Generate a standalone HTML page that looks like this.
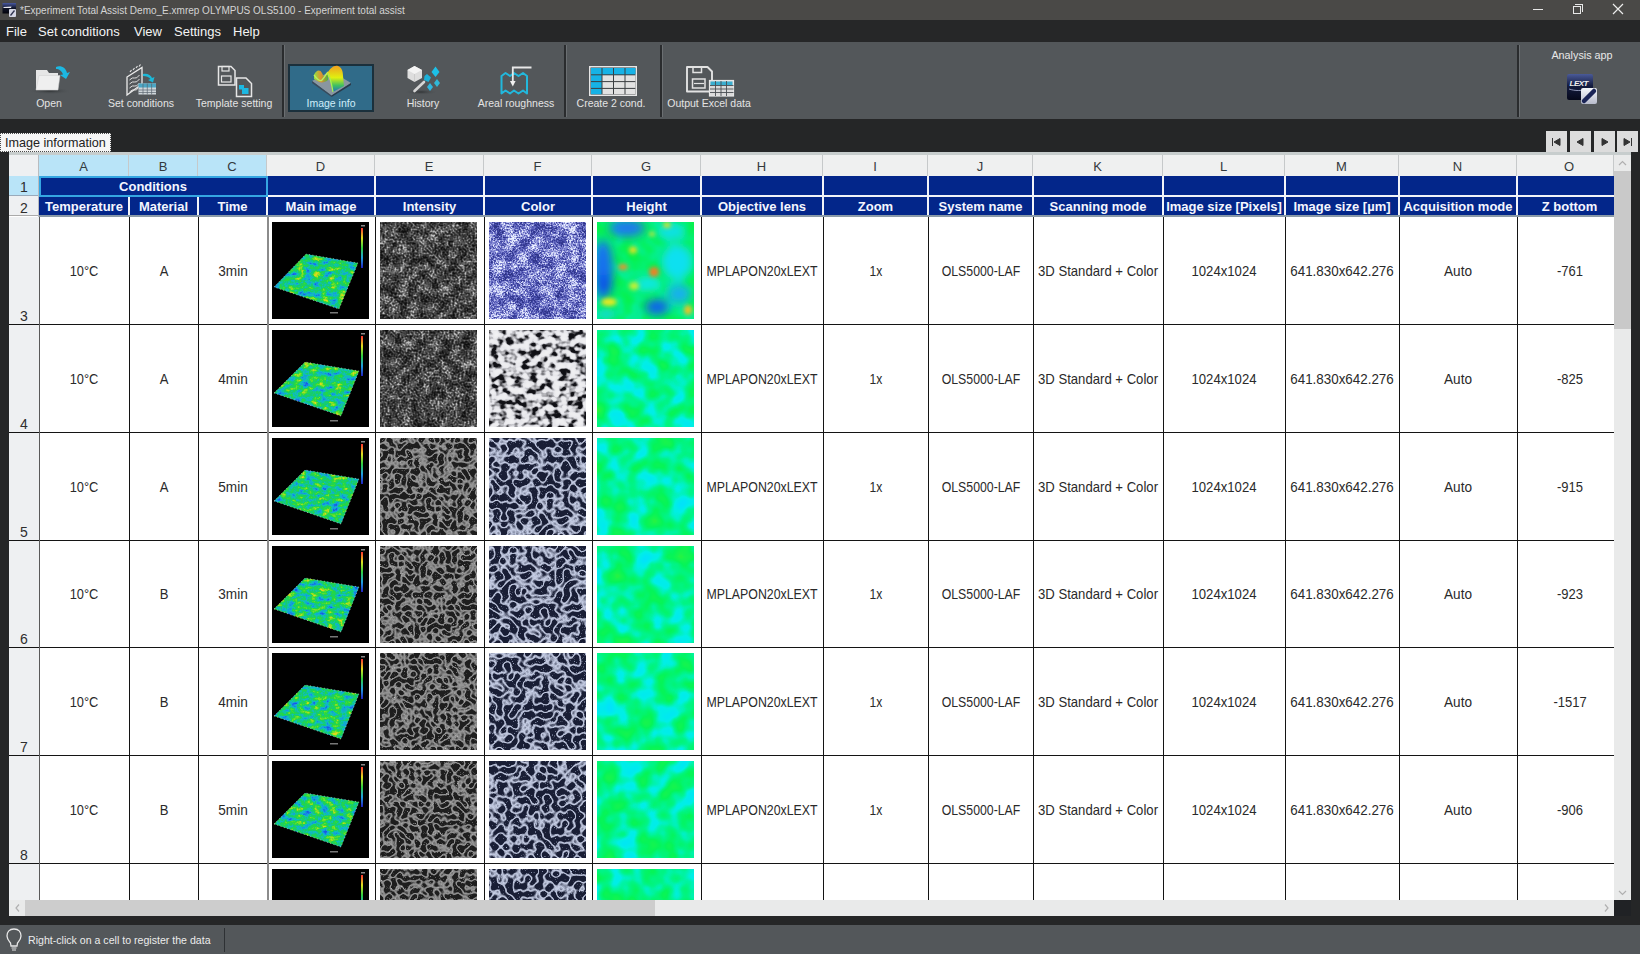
<!DOCTYPE html>
<html><head><meta charset="utf-8">
<style>
*{box-sizing:border-box;margin:0;padding:0}
html,body{width:1640px;height:954px;overflow:hidden;background:#252627;font-family:"Liberation Sans",sans-serif;position:relative}
.a{position:absolute}
svg{display:block}
#title{left:0;top:0;width:1640px;height:20px;background:#4a4947;color:#dcdcdc;font-size:10px;line-height:20px}
#menu{left:0;top:20px;width:1640px;height:22px;background:#262728;color:#f4f4f4;font-size:13px;line-height:24px}
#tool{left:0;top:42px;width:1640px;height:77px;background:#53575a}
.tl{position:absolute;top:97px;font-size:10.5px;color:#e4e4e4;white-space:nowrap;line-height:12px;text-align:center;width:120px;margin-left:-60px}
.sep{position:absolute;top:45px;width:3px;height:72px;border-left:2px solid #2a2c2e;border-right:1px solid #6b6f72}
#status{left:0;top:925px;width:1640px;height:29px;background:#53575a}
#sheet{left:9px;top:152px;width:1622px;height:764px;background:#fff;overflow:hidden}
.ch{position:absolute;top:155px;height:21px;background:#eff0f0;border-right:1px solid #c6c9ca;color:#34393c;font-size:13px;line-height:24px;text-align:center}
.nv{position:absolute;background:#03268a;color:#f4f6ff;font-weight:bold;font-size:13px;text-align:center;white-space:nowrap}
.rh{position:absolute;left:9px;width:30px;background:#eef0f2;color:#2e2e2e;font-size:14px;text-align:center}
.vl{position:absolute;width:1px;background:#141414}
.hl{position:absolute;height:1px;background:#141414}
.tx{position:absolute;color:#2a2a2a;font-size:15px;white-space:nowrap;line-height:16px}
.nb{position:absolute;top:131px;width:21px;height:21px;background:#dcdcdc}
</style></head><body>
<div id="title" class="a">
<svg class="a" style="left:0;top:0" width="20" height="20" viewBox="0 0 20 20"><defs><linearGradient id="ti" x1="0" y1="0" x2="0" y2="1"><stop offset="0" stop-color="#4858a0"/><stop offset="0.5" stop-color="#101428"/><stop offset="1" stop-color="#04040c"/></linearGradient></defs><rect x="2.5" y="3" width="13.5" height="10.5" fill="url(#ti)"/><path d="M3.5 7 L11.5 6.5 L11 8 L3.5 8 Z" fill="#e8e8f0"/><rect x="9" y="9" width="7" height="8" rx="1" fill="#d4d6e4"/><path d="M10.5 15.5 L14.5 10.5" stroke="#303450" stroke-width="1.3"/></svg>
<div class="a" style="left:20px;top:1px;color:#d4d4d4">*Experiment Total Assist Demo_E.xmrep OLYMPUS OLS5100 - Experiment total assist</div>
<div class="a" style="left:1533px;top:9px;width:10px;height:1px;background:#e8e8e8"></div>
<div class="a" style="left:1573px;top:6px;width:8px;height:8px;border:1px solid #e8e8e8"></div>
<div class="a" style="left:1575px;top:4px;width:8px;height:8px;border-top:1px solid #e8e8e8;border-right:1px solid #e8e8e8"></div>
<svg class="a" style="left:1612px;top:3px" width="12" height="12" viewBox="0 0 12 12"><path d="M1 1 L11 11 M11 1 L1 11" stroke="#ececec" stroke-width="1.2"/></svg>
</div>
<div id="menu" class="a">
<span class="a" style="left:6px">File</span>
<span class="a" style="left:38px">Set conditions</span>
<span class="a" style="left:134px">View</span>
<span class="a" style="left:174px">Settings</span>
<span class="a" style="left:233px">Help</span>
</div>
<div id="tool" class="a"></div>
<div class="sep" style="left:282px"></div>
<div class="sep" style="left:564px"></div>
<div class="sep" style="left:660px"></div>
<div class="sep" style="left:1517px"></div>
<div class="a" style="left:288px;top:64px;width:86px;height:48px;background:#306b89;border:2px solid #1b303c"></div>
<div class="tl" style="left:49px">Open</div>
<div class="tl" style="left:141px">Set conditions</div>
<div class="tl" style="left:234px">Template setting</div>
<div class="tl" style="left:331px;color:#cfeefa">Image info</div>
<div class="tl" style="left:423px">History</div>
<div class="tl" style="left:516px">Areal roughness</div>
<div class="tl" style="left:611px">Create 2 cond.</div>
<div class="tl" style="left:709px">Output Excel data</div>
<div class="a" style="left:1522px;top:48px;width:120px;text-align:center;color:#e8e8e8;font-size:10.8px;line-height:14px">Analysis app</div>

<svg class="a" style="left:25px;top:58px" width="50" height="40" viewBox="25 58 50 40">
 <defs><radialGradient id="sh" cx="0.5" cy="0.5" r="0.5"><stop offset="0" stop-color="#2e3133" stop-opacity="0.9"/><stop offset="1" stop-color="#53575a" stop-opacity="0"/></radialGradient></defs>
 <ellipse cx="50" cy="91" rx="22" ry="3.5" fill="url(#sh)"/>
 <path d="M36 70 H47 L49 73 H58 V90 H36 Z" fill="#e6e6e6"/>
 <path d="M39 75.5 H60 L58 90 H36 Z" fill="#efefef" stroke="#cfcfcf" stroke-width="0.5"/>
 <path d="M56 67 C61 65 66 68 67 73 L70 72 L66 79 L60 75 L63 74.5 C62 71 59 69 56 69 Z" fill="#1cb8e2"/>
</svg>
<svg class="a" style="left:120px;top:60px" width="42" height="40" viewBox="120 60 42 40">
 <path d="M127 77 L142 67.5 L142 84 L127 95 Z" fill="#53575a" stroke="#ececec" stroke-width="1.3"/>
 <path d="M130 72 l1.5 -2 M133 70 l1.5 -2 M136 68 l1.5 -2 M139 66.5 l1.5 -2" stroke="#e6e6e6" stroke-width="1.2"/>
 <path d="M129.5 80 q3 -3 5 -2 t5 -3 M129.5 84 q3 -3 5 -2 t5 -3 M129.5 88 q3 -3 5 -2 t5 -3 M129.5 92 q3 -3 5 -2 t4 -2.5" fill="none" stroke="#e0e0e0" stroke-width="1"/>
 <path d="M143 74 C147 73 151 75 152 78 L154.5 77 L153 82.5 L148 80 L150.5 79 C149 77 146 76 143 76 Z" fill="#1cb8d8"/>
 <rect x="138.5" y="83.5" width="17.5" height="11" fill="#cfd6da"/>
 <rect x="138.5" y="83.5" width="17.5" height="4" fill="#4ba6c4"/>
 <path d="M138.5 90 H156 M138.5 92.5 H156 M143 83.5 V94.5 M147.3 83.5 V94.5 M151.6 83.5 V94.5" stroke="#5a6670" stroke-width="0.7"/>
</svg>
<svg class="a" style="left:214px;top:62px" width="42" height="38" viewBox="214 62 42 38">
 <path d="M218.5 66.5 H231 L235 70.5 V85 H218.5 Z" fill="none" stroke="#e6e6e6" stroke-width="1.5"/>
 <rect x="222" y="66.5" width="7" height="4.5" fill="none" stroke="#e6e6e6" stroke-width="1.2"/>
 <rect x="221.5" y="76" width="9.5" height="6" fill="none" stroke="#e6e6e6" stroke-width="1.2"/>
 <path d="M236.5 78 H246 L251.5 83.5 V96.5 H236.5 Z" fill="#53575a" stroke="#e6e6e6" stroke-width="1.5"/>
 <rect x="239" y="85" width="5" height="4.5" fill="#1cb8e2"/><rect x="242" y="88" width="6.5" height="6" fill="#1cb8e2"/>
</svg>
<svg class="a" style="left:306px;top:62px" width="50" height="38" viewBox="306 62 50 38">
 <defs>
  <linearGradient id="gR" x1="0" y1="0" x2="0" y2="1"><stop offset="0" stop-color="#f0a020"/><stop offset="0.45" stop-color="#e0f010"/><stop offset="0.75" stop-color="#40c060"/><stop offset="1" stop-color="#2070c0"/></linearGradient>
  <linearGradient id="gL" x1="0" y1="0" x2="1" y2="0"><stop offset="0" stop-color="#90e040"/><stop offset="0.5" stop-color="#e09030"/><stop offset="1" stop-color="#50b040"/></linearGradient>
 </defs>
 <path d="M312 81 L331 71 L351 83 L331.5 95.5 Z" fill="#8a96a0"/>
 <path d="M312 81 L331.5 95.5 L331.5 97 L312 83 Z" fill="#3a4a5a"/>
 <path d="M331.5 95.5 L351 83 L351 85 L331.5 97 Z" fill="#2a3a4a"/>
 <path d="M314 75 C316 70 320 69 322 73 C324 78 326 76 328 72 L328 80 C326 82 322 83 319 82 L314 79 Z" fill="url(#gL)"/>
 <path d="M314 75 C317 79 320 82 322 80 C325 77 326 74 328 72" fill="none" stroke="#b8f060" stroke-width="1.4"/>
 <path d="M327 74 C330 68 334 65 338 66 C341 67 343 70 343 76 L344 86 L333 92 C332 88 331 82 329 78 Z" fill="url(#gR)"/>
 <path d="M328 73 C331 80 332 86 333 92" fill="none" stroke="#a8f050" stroke-width="1.3"/>
</svg>
<svg class="a" style="left:400px;top:60px" width="46" height="38" viewBox="400 60 46 38">
 <ellipse cx="421" cy="92" rx="17" ry="3" fill="url(#sh)"/>
 <path d="M407.5 70 L414.5 66 L422 70 L422 78 L414.5 82 L407.5 78 Z" fill="#dedede"/>
 <path d="M407.5 70 L414.5 74 L422 70 L414.5 66 Z" fill="#f4f4f4"/>
 <path d="M414.5 74 V82" stroke="#c0c0c0" stroke-width="0.6"/>
 <path d="M414.5 91 L424 82" stroke="#d6d6d6" stroke-width="2.6" stroke-linecap="round"/>
 <path d="M435.5 66.5 L439.5 72 L435.5 77 L431.5 72 Z" fill="#1cc0e8"/>
 <path d="M427 74 L431 77.5 L428.5 82 L424 80 L424.5 76 Z" fill="#1cb0d8"/>
 <path d="M437 79 L440 83 L437 87 L434 83 Z" fill="#30b8d8"/>
 <path d="M430 83 L433 87 L430 91 L427 87 Z" fill="#30b8e0"/>
</svg>
<svg class="a" style="left:496px;top:60px" width="42" height="38" viewBox="496 60 42 38">
 <path d="M501.5 76 L505.5 73 L510 76 L514 73 L518.5 76 L523 73 L527 76 L527 93.5 L523 90.5 L518.5 93.5 L514 90.5 L510 93.5 L505.5 90.5 L501.5 93.5 Z" fill="none" stroke="#22b8dc" stroke-width="2" stroke-linejoin="round"/>
 <path d="M531.5 67.5 H512.8 V82" fill="none" stroke="#e8e8e8" stroke-width="1.8"/>
 <path d="M510 81 L512.8 86.5 L515.6 81 Z" fill="#f0f0f0"/>
</svg>
<svg class="a" style="left:586px;top:63px" width="54" height="36" viewBox="586 63 54 36">
 <rect x="589" y="66" width="48" height="30" fill="#e6e6e6"/>
 <rect x="590.5" y="67.5" width="45" height="27" fill="#3a3e41"/>
 <g fill="#16b2e6"><rect x="591" y="68" width="10.5" height="6.3"/><rect x="602.5" y="68" width="10.5" height="6.3"/><rect x="614" y="68" width="10.5" height="6.3"/><rect x="625.5" y="68" width="10" height="6.3"/>
 <rect x="591" y="75.3" width="10.5" height="5.8"/><rect x="591" y="82.1" width="10.5" height="5.8"/><rect x="591" y="88.9" width="10.5" height="5.3"/></g>
 <g fill="#e2e2e2"><rect x="602.5" y="75.3" width="10.5" height="5.8"/><rect x="614" y="75.3" width="10.5" height="5.8"/><rect x="625.5" y="75.3" width="10" height="5.8"/>
 <rect x="602.5" y="82.1" width="10.5" height="5.8"/><rect x="614" y="82.1" width="10.5" height="5.8"/><rect x="625.5" y="82.1" width="10" height="5.8"/>
 <rect x="602.5" y="88.9" width="10.5" height="5.3"/><rect x="614" y="88.9" width="10.5" height="5.3"/><rect x="625.5" y="88.9" width="10" height="5.3"/></g>
</svg>
<svg class="a" style="left:682px;top:62px" width="56" height="38" viewBox="682 62 56 38">
 <path d="M687 67 H707.5 L712 71.5 V91.5 H687 Z" fill="none" stroke="#e2e2e2" stroke-width="1.9" stroke-linejoin="round"/>
 <rect x="693" y="67" width="8.5" height="5.5" fill="none" stroke="#e2e2e2" stroke-width="1.5"/>
 <rect x="692.5" y="79" width="12.5" height="9" fill="none" stroke="#e2e2e2" stroke-width="1.5"/>
 <path d="M694 83.5 H704" stroke="#e2e2e2" stroke-width="1.2"/>
 <rect x="709.5" y="80.5" width="24" height="15.5" fill="#dadada" stroke="#e6e6e6" stroke-width="1.2"/>
 <rect x="710.5" y="81.5" width="22" height="4" fill="#3aaed0"/>
 <path d="M710 85.5 H733.5 M710 89 H733.5 M710 92.5 H733.5 M715.5 81 V96 M721 81 V96 M726.5 81 V96" stroke="#4a4e52" stroke-width="0.9"/>
</svg>
<svg class="a" style="left:1564px;top:72px" width="36" height="34" viewBox="1564 72 36 34">
 <defs><linearGradient id="lx" x1="0" y1="0" x2="0" y2="1"><stop offset="0" stop-color="#4a5a98"/><stop offset="0.45" stop-color="#141c40"/><stop offset="1" stop-color="#05081a"/></linearGradient>
 <linearGradient id="bd" x1="0" y1="0" x2="0" y2="1"><stop offset="0" stop-color="#f4f6fa"/><stop offset="1" stop-color="#b8bccc"/></linearGradient></defs>
 <rect x="1567" y="74" width="26" height="26" rx="2" fill="url(#lx)"/>
 <text x="1569.5" y="86" font-family="Liberation Sans" font-style="italic" font-weight="bold" font-size="8" fill="#f0f0f0" textLength="19">LEXT</text>
 <path d="M1569 89 C1575 91 1581 91 1590 89" stroke="#b0b8d8" stroke-width="0.8" fill="none"/>
 <rect x="1581" y="88" width="16" height="16" rx="2" fill="url(#bd)"/>
 <path d="M1584 101 L1594 91" stroke="#1a2456" stroke-width="4.5" stroke-linecap="round"/>
</svg>
<div class="a" style="left:0;top:133px;width:111px;height:19px;background:#f6f6f6;border:1px dotted #4a4a4a;color:#222;font-size:12.6px;line-height:18px;padding-left:4px;white-space:nowrap">Image information</div>
<div class="nb" style="left:1546px"><svg width="21" height="21" viewBox="0 0 21 21"><path d="M6.5 7 V15 M14 7.5 L8 11 L14 14.5 Z" fill="#333" stroke="#333" stroke-width="1"/></svg></div>
<div class="nb" style="left:1570px"><svg width="21" height="21" viewBox="0 0 21 21"><path d="M13 7.5 L7 11 L13 14.5 Z" fill="#333" stroke="#333" stroke-width="1"/></svg></div>
<div class="nb" style="left:1594px"><svg width="21" height="21" viewBox="0 0 21 21"><path d="M8 7.5 L14 11 L8 14.5 Z" fill="#333" stroke="#333" stroke-width="1"/></svg></div>
<div class="nb" style="left:1617px"><svg width="21" height="21" viewBox="0 0 21 21"><path d="M14.5 7 V15 M7 7.5 L13 11 L7 14.5 Z" fill="#333" stroke="#333" stroke-width="1"/></svg></div>
<div id="sheet" class="a"></div>
<div class="a" style="left:9px;top:152px;width:1622px;height:3px;background:#c7cdcd"></div>
<div class="a" style="left:9px;top:155px;width:30px;height:21px;background:#eef0f2;border-right:1px solid #c6c9ca"></div>
<div class="ch" style="left:39px;width:90px;background:#b9e4f8">A</div>
<div class="ch" style="left:129px;width:69px;background:#b9e4f8">B</div>
<div class="ch" style="left:198px;width:69px;background:#b9e4f8">C</div>
<div class="ch" style="left:267px;width:108px;background:#eff0f0">D</div>
<div class="ch" style="left:375px;width:109px;background:#eff0f0">E</div>
<div class="ch" style="left:484px;width:108px;background:#eff0f0">F</div>
<div class="ch" style="left:592px;width:109px;background:#eff0f0">G</div>
<div class="ch" style="left:701px;width:122px;background:#eff0f0">H</div>
<div class="ch" style="left:823px;width:105px;background:#eff0f0">I</div>
<div class="ch" style="left:928px;width:105px;background:#eff0f0">J</div>
<div class="ch" style="left:1033px;width:130px;background:#eff0f0">K</div>
<div class="ch" style="left:1163px;width:122px;background:#eff0f0">L</div>
<div class="ch" style="left:1285px;width:114px;background:#eff0f0">M</div>
<div class="ch" style="left:1399px;width:118px;background:#eff0f0">N</div>
<div class="ch" style="left:1517px;width:97px;background:#eff0f0;padding-left:8px">O</div>
<div class="a" style="left:39px;top:176px;width:1575px;height:40px;background:#03268a"></div>
<div class="a" style="left:267px;top:195px;width:1347px;height:2px;background:#f2f4f8"></div>
<div class="a" style="left:266px;top:176px;width:2px;height:40px;background:#f2f4f8"></div>
<div class="a" style="left:374px;top:176px;width:2px;height:40px;background:#f2f4f8"></div>
<div class="a" style="left:483px;top:176px;width:2px;height:40px;background:#f2f4f8"></div>
<div class="a" style="left:591px;top:176px;width:2px;height:40px;background:#f2f4f8"></div>
<div class="a" style="left:700px;top:176px;width:2px;height:40px;background:#f2f4f8"></div>
<div class="a" style="left:822px;top:176px;width:2px;height:40px;background:#f2f4f8"></div>
<div class="a" style="left:927px;top:176px;width:2px;height:40px;background:#f2f4f8"></div>
<div class="a" style="left:1032px;top:176px;width:2px;height:40px;background:#f2f4f8"></div>
<div class="a" style="left:1162px;top:176px;width:2px;height:40px;background:#f2f4f8"></div>
<div class="a" style="left:1284px;top:176px;width:2px;height:40px;background:#f2f4f8"></div>
<div class="a" style="left:1398px;top:176px;width:2px;height:40px;background:#f2f4f8"></div>
<div class="a" style="left:1516px;top:176px;width:2px;height:40px;background:#f2f4f8"></div>
<div class="a" style="left:128px;top:197px;width:2px;height:19px;background:#f2f4f8"></div>
<div class="a" style="left:197px;top:197px;width:2px;height:19px;background:#f2f4f8"></div>
<div class="a" style="left:39px;top:176px;width:229px;height:21px;border:2px solid #35a6e2"></div>
<div class="nv" style="left:39px;top:177px;width:228px;height:20px;line-height:20px;background:transparent">Conditions</div>
<div class="nv" style="left:39px;top:197px;width:90px;height:18px;line-height:19px;background:transparent">Temperature</div>
<div class="nv" style="left:129px;top:197px;width:69px;height:18px;line-height:19px;background:transparent">Material</div>
<div class="nv" style="left:198px;top:197px;width:69px;height:18px;line-height:19px;background:transparent">Time</div>
<div class="nv" style="left:267px;top:197px;width:108px;height:18px;line-height:19px;background:transparent">Main image</div>
<div class="nv" style="left:375px;top:197px;width:109px;height:18px;line-height:19px;background:transparent">Intensity</div>
<div class="nv" style="left:484px;top:197px;width:108px;height:18px;line-height:19px;background:transparent">Color</div>
<div class="nv" style="left:592px;top:197px;width:109px;height:18px;line-height:19px;background:transparent">Height</div>
<div class="nv" style="left:701px;top:197px;width:122px;height:18px;line-height:19px;background:transparent">Objective lens</div>
<div class="nv" style="left:823px;top:197px;width:105px;height:18px;line-height:19px;background:transparent">Zoom</div>
<div class="nv" style="left:928px;top:197px;width:105px;height:18px;line-height:19px;background:transparent">System name</div>
<div class="nv" style="left:1033px;top:197px;width:130px;height:18px;line-height:19px;background:transparent">Scanning mode</div>
<div class="nv" style="left:1163px;top:197px;width:122px;height:18px;line-height:19px;background:transparent">Image size [Pixels]</div>
<div class="nv" style="left:1285px;top:197px;width:114px;height:18px;line-height:19px;background:transparent">Image size [µm]</div>
<div class="nv" style="left:1399px;top:197px;width:118px;height:18px;line-height:19px;background:transparent">Acquisition mode</div>
<div class="nv" style="left:1517px;top:197px;width:105px;height:18px;line-height:19px;background:transparent">Z bottom</div>
<div class="a" style="left:39px;top:215px;width:1575px;height:2px;background:#8a9aa8"></div>
<div class="rh" style="top:176px;height:20px;line-height:23px;background:#b9e4f8;border-bottom:1px solid #9ab">1</div>
<div class="rh" style="top:196px;height:20px;line-height:24px;border-bottom:1px solid #aaa">2</div>
<div class="a" style="left:38px;top:155px;width:1px;height:62px;background:#b8bcc0"></div>
<div class="rh" style="top:217px;height:107px"><span class="a" style="left:0;width:30px;bottom:0px;line-height:16px">3</span></div>
<div class="rh" style="top:325px;height:107px"><span class="a" style="left:0;width:30px;bottom:0px;line-height:16px">4</span></div>
<div class="rh" style="top:433px;height:107px"><span class="a" style="left:0;width:30px;bottom:0px;line-height:16px">5</span></div>
<div class="rh" style="top:541px;height:106px"><span class="a" style="left:0;width:30px;bottom:0px;line-height:16px">6</span></div>
<div class="rh" style="top:648px;height:107px"><span class="a" style="left:0;width:30px;bottom:0px;line-height:16px">7</span></div>
<div class="rh" style="top:756px;height:107px"><span class="a" style="left:0;width:30px;bottom:0px;line-height:16px">8</span></div>
<div class="rh" style="top:864px;height:36px"><span class="a" style="left:0;width:30px;bottom:0px;line-height:16px"></span></div>
<div class="hl" style="left:9px;top:324px;width:1605px"></div>
<div class="hl" style="left:9px;top:432px;width:1605px"></div>
<div class="hl" style="left:9px;top:540px;width:1605px"></div>
<div class="hl" style="left:9px;top:647px;width:1605px"></div>
<div class="hl" style="left:9px;top:755px;width:1605px"></div>
<div class="hl" style="left:9px;top:863px;width:1605px"></div>
<div class="vl" style="left:129px;top:217px;height:683px;width:1px;background:#141414"></div>
<div class="vl" style="left:198px;top:217px;height:683px;width:1px;background:#141414"></div>
<div class="vl" style="left:267px;top:217px;height:683px;width:2px;background:#8c8c8c"></div>
<div class="vl" style="left:375px;top:217px;height:683px;width:1px;background:#141414"></div>
<div class="vl" style="left:484px;top:217px;height:683px;width:1px;background:#141414"></div>
<div class="vl" style="left:592px;top:217px;height:683px;width:1px;background:#141414"></div>
<div class="vl" style="left:701px;top:217px;height:683px;width:1px;background:#141414"></div>
<div class="vl" style="left:823px;top:217px;height:683px;width:1px;background:#141414"></div>
<div class="vl" style="left:928px;top:217px;height:683px;width:1px;background:#141414"></div>
<div class="vl" style="left:1033px;top:217px;height:683px;width:1px;background:#141414"></div>
<div class="vl" style="left:1163px;top:217px;height:683px;width:1px;background:#141414"></div>
<div class="vl" style="left:1285px;top:217px;height:683px;width:1px;background:#141414"></div>
<div class="vl" style="left:1399px;top:217px;height:683px;width:1px;background:#141414"></div>
<div class="vl" style="left:1517px;top:217px;height:683px;width:1px;background:#141414"></div>
<div class="a" style="left:39px;top:217px;width:1px;height:683px;background:#5a5a5a"></div>
<div class="tx" style="left:84.0px;top:262.5px;transform:translateX(-50%) scaleX(0.856)">10°C</div>
<div class="tx" style="left:163.5px;top:262.5px;transform:translateX(-50%) scaleX(0.87)">A</div>
<div class="tx" style="left:232.5px;top:262.5px;transform:translateX(-50%) scaleX(0.907)">3min</div>
<div class="tx" style="left:761.5px;top:262.5px;transform:translateX(-50%) scaleX(0.822)">MPLAPON20xLEXT</div>
<div class="tx" style="left:875.5px;top:262.5px;transform:translateX(-50%) scaleX(0.808)">1x</div>
<div class="tx" style="left:980.5px;top:262.5px;transform:translateX(-50%) scaleX(0.819)">OLS5000-LAF</div>
<div class="tx" style="left:1098.0px;top:262.5px;transform:translateX(-50%) scaleX(0.875)">3D Standard + Color</div>
<div class="tx" style="left:1224.0px;top:262.5px;transform:translateX(-50%) scaleX(0.875)">1024x1024</div>
<div class="tx" style="left:1342.0px;top:262.5px;transform:translateX(-50%) scaleX(0.893)">641.830x642.276</div>
<div class="tx" style="left:1458.0px;top:262.5px;transform:translateX(-50%) scaleX(0.907)">Auto</div>
<div class="tx" style="left:1569.5px;top:262.5px;transform:translateX(-50%) scaleX(0.866)">-761</div>
<div class="tx" style="left:84.0px;top:370.5px;transform:translateX(-50%) scaleX(0.856)">10°C</div>
<div class="tx" style="left:163.5px;top:370.5px;transform:translateX(-50%) scaleX(0.87)">A</div>
<div class="tx" style="left:232.5px;top:370.5px;transform:translateX(-50%) scaleX(0.907)">4min</div>
<div class="tx" style="left:761.5px;top:370.5px;transform:translateX(-50%) scaleX(0.822)">MPLAPON20xLEXT</div>
<div class="tx" style="left:875.5px;top:370.5px;transform:translateX(-50%) scaleX(0.808)">1x</div>
<div class="tx" style="left:980.5px;top:370.5px;transform:translateX(-50%) scaleX(0.819)">OLS5000-LAF</div>
<div class="tx" style="left:1098.0px;top:370.5px;transform:translateX(-50%) scaleX(0.875)">3D Standard + Color</div>
<div class="tx" style="left:1224.0px;top:370.5px;transform:translateX(-50%) scaleX(0.875)">1024x1024</div>
<div class="tx" style="left:1342.0px;top:370.5px;transform:translateX(-50%) scaleX(0.893)">641.830x642.276</div>
<div class="tx" style="left:1458.0px;top:370.5px;transform:translateX(-50%) scaleX(0.907)">Auto</div>
<div class="tx" style="left:1569.5px;top:370.5px;transform:translateX(-50%) scaleX(0.866)">-825</div>
<div class="tx" style="left:84.0px;top:478.5px;transform:translateX(-50%) scaleX(0.856)">10°C</div>
<div class="tx" style="left:163.5px;top:478.5px;transform:translateX(-50%) scaleX(0.87)">A</div>
<div class="tx" style="left:232.5px;top:478.5px;transform:translateX(-50%) scaleX(0.907)">5min</div>
<div class="tx" style="left:761.5px;top:478.5px;transform:translateX(-50%) scaleX(0.822)">MPLAPON20xLEXT</div>
<div class="tx" style="left:875.5px;top:478.5px;transform:translateX(-50%) scaleX(0.808)">1x</div>
<div class="tx" style="left:980.5px;top:478.5px;transform:translateX(-50%) scaleX(0.819)">OLS5000-LAF</div>
<div class="tx" style="left:1098.0px;top:478.5px;transform:translateX(-50%) scaleX(0.875)">3D Standard + Color</div>
<div class="tx" style="left:1224.0px;top:478.5px;transform:translateX(-50%) scaleX(0.875)">1024x1024</div>
<div class="tx" style="left:1342.0px;top:478.5px;transform:translateX(-50%) scaleX(0.893)">641.830x642.276</div>
<div class="tx" style="left:1458.0px;top:478.5px;transform:translateX(-50%) scaleX(0.907)">Auto</div>
<div class="tx" style="left:1569.5px;top:478.5px;transform:translateX(-50%) scaleX(0.866)">-915</div>
<div class="tx" style="left:84.0px;top:586.0px;transform:translateX(-50%) scaleX(0.856)">10°C</div>
<div class="tx" style="left:163.5px;top:586.0px;transform:translateX(-50%) scaleX(0.87)">B</div>
<div class="tx" style="left:232.5px;top:586.0px;transform:translateX(-50%) scaleX(0.907)">3min</div>
<div class="tx" style="left:761.5px;top:586.0px;transform:translateX(-50%) scaleX(0.822)">MPLAPON20xLEXT</div>
<div class="tx" style="left:875.5px;top:586.0px;transform:translateX(-50%) scaleX(0.808)">1x</div>
<div class="tx" style="left:980.5px;top:586.0px;transform:translateX(-50%) scaleX(0.819)">OLS5000-LAF</div>
<div class="tx" style="left:1098.0px;top:586.0px;transform:translateX(-50%) scaleX(0.875)">3D Standard + Color</div>
<div class="tx" style="left:1224.0px;top:586.0px;transform:translateX(-50%) scaleX(0.875)">1024x1024</div>
<div class="tx" style="left:1342.0px;top:586.0px;transform:translateX(-50%) scaleX(0.893)">641.830x642.276</div>
<div class="tx" style="left:1458.0px;top:586.0px;transform:translateX(-50%) scaleX(0.907)">Auto</div>
<div class="tx" style="left:1569.5px;top:586.0px;transform:translateX(-50%) scaleX(0.866)">-923</div>
<div class="tx" style="left:84.0px;top:693.5px;transform:translateX(-50%) scaleX(0.856)">10°C</div>
<div class="tx" style="left:163.5px;top:693.5px;transform:translateX(-50%) scaleX(0.87)">B</div>
<div class="tx" style="left:232.5px;top:693.5px;transform:translateX(-50%) scaleX(0.907)">4min</div>
<div class="tx" style="left:761.5px;top:693.5px;transform:translateX(-50%) scaleX(0.822)">MPLAPON20xLEXT</div>
<div class="tx" style="left:875.5px;top:693.5px;transform:translateX(-50%) scaleX(0.808)">1x</div>
<div class="tx" style="left:980.5px;top:693.5px;transform:translateX(-50%) scaleX(0.819)">OLS5000-LAF</div>
<div class="tx" style="left:1098.0px;top:693.5px;transform:translateX(-50%) scaleX(0.875)">3D Standard + Color</div>
<div class="tx" style="left:1224.0px;top:693.5px;transform:translateX(-50%) scaleX(0.875)">1024x1024</div>
<div class="tx" style="left:1342.0px;top:693.5px;transform:translateX(-50%) scaleX(0.893)">641.830x642.276</div>
<div class="tx" style="left:1458.0px;top:693.5px;transform:translateX(-50%) scaleX(0.907)">Auto</div>
<div class="tx" style="left:1569.5px;top:693.5px;transform:translateX(-50%) scaleX(0.866)">-1517</div>
<div class="tx" style="left:84.0px;top:801.5px;transform:translateX(-50%) scaleX(0.856)">10°C</div>
<div class="tx" style="left:163.5px;top:801.5px;transform:translateX(-50%) scaleX(0.87)">B</div>
<div class="tx" style="left:232.5px;top:801.5px;transform:translateX(-50%) scaleX(0.907)">5min</div>
<div class="tx" style="left:761.5px;top:801.5px;transform:translateX(-50%) scaleX(0.822)">MPLAPON20xLEXT</div>
<div class="tx" style="left:875.5px;top:801.5px;transform:translateX(-50%) scaleX(0.808)">1x</div>
<div class="tx" style="left:980.5px;top:801.5px;transform:translateX(-50%) scaleX(0.819)">OLS5000-LAF</div>
<div class="tx" style="left:1098.0px;top:801.5px;transform:translateX(-50%) scaleX(0.875)">3D Standard + Color</div>
<div class="tx" style="left:1224.0px;top:801.5px;transform:translateX(-50%) scaleX(0.875)">1024x1024</div>
<div class="tx" style="left:1342.0px;top:801.5px;transform:translateX(-50%) scaleX(0.893)">641.830x642.276</div>
<div class="tx" style="left:1458.0px;top:801.5px;transform:translateX(-50%) scaleX(0.907)">Auto</div>
<div class="tx" style="left:1569.5px;top:801.5px;transform:translateX(-50%) scaleX(0.866)">-906</div>
<svg width="0" height="0" style="position:absolute">
<defs>
<filter id="fIntDark" x="0" y="0" width="100%" height="100%" color-interpolation-filters="sRGB">
 <feTurbulence type="fractalNoise" baseFrequency="0.5" numOctaves="2" seed="3" result="hi0"/>
 <feColorMatrix in="hi0" type="matrix" values="1 0 0 0 0  1 0 0 0 0  1 0 0 0 0  0 0 0 0 1" result="hi"/>
 <feTurbulence type="fractalNoise" baseFrequency="0.1" numOctaves="3" seed="9" result="lo0"/>
 <feColorMatrix in="lo0" type="matrix" values="1 0 0 0 0  1 0 0 0 0  1 0 0 0 0  0 0 0 0 1" result="lo"/>
 <feComposite in="hi" in2="lo" operator="arithmetic" k1="0" k2="1.4" k3="1.0" k4="-0.7" result="g"/>
 <feComponentTransfer in="g"><feFuncR type="table" tableValues="0.06 0.11 0.18 0.27 0.39 0.56 0.75"/><feFuncG type="table" tableValues="0.06 0.11 0.18 0.27 0.39 0.56 0.75"/><feFuncB type="table" tableValues="0.06 0.11 0.18 0.27 0.39 0.56 0.75"/></feComponentTransfer>
</filter>
<filter id="fIntCell" x="0" y="0" width="100%" height="100%" color-interpolation-filters="sRGB">
 <feTurbulence type="fractalNoise" baseFrequency="0.16" numOctaves="1" seed="5" result="lo0"/>
 <feColorMatrix in="lo0" type="matrix" values="1 0 0 0 0  1 0 0 0 0  1 0 0 0 0  0 0 0 0 1" result="lo"/>
 <feTurbulence type="fractalNoise" baseFrequency="0.9" numOctaves="1" seed="2" result="hi0"/>
 <feColorMatrix in="hi0" type="matrix" values="1 0 0 0 0  1 0 0 0 0  1 0 0 0 0  0 0 0 0 1" result="hi"/>
 <feComposite in="lo" in2="hi" operator="arithmetic" k1="0" k2="2.6" k3="0.1" k4="-0.850" result="g"/>
 <feComponentTransfer in="g" result="c"><feFuncR type="table" tableValues="0.12 0.12 0.12 0.12 0.12 0.12 0.12 0.12 0.12 0.12 0.146 0.21 0.274 0.339 0.403 0.467 0.5 0.525 0.55 0.575 0.6 0.575 0.55 0.525 0.5 0.467 0.403 0.339 0.274 0.21 0.146 0.12 0.12 0.12 0.12 0.12 0.12 0.12 0.12 0.12 0.12"/><feFuncG type="table" tableValues="0.12 0.12 0.12 0.12 0.12 0.12 0.12 0.12 0.12 0.12 0.146 0.21 0.274 0.339 0.403 0.467 0.5 0.525 0.55 0.575 0.6 0.575 0.55 0.525 0.5 0.467 0.403 0.339 0.274 0.21 0.146 0.12 0.12 0.12 0.12 0.12 0.12 0.12 0.12 0.12 0.12"/><feFuncB type="table" tableValues="0.12 0.12 0.12 0.12 0.12 0.12 0.12 0.12 0.12 0.12 0.146 0.21 0.274 0.339 0.403 0.467 0.5 0.525 0.55 0.575 0.6 0.575 0.55 0.525 0.5 0.467 0.403 0.339 0.274 0.21 0.146 0.12 0.12 0.12 0.12 0.12 0.12 0.12 0.12 0.12 0.12"/></feComponentTransfer>
 <feColorMatrix in="hi" type="matrix" values="0 0 0 0 0.75  0 0 0 0 0.75  0 0 0 0 0.75  5 0 0 0 -3.2" result="s"/>
 <feMerge><feMergeNode in="c"/><feMergeNode in="s"/></feMerge>
</filter>
<filter id="fColBlue" x="0" y="0" width="100%" height="100%" color-interpolation-filters="sRGB">
 <feTurbulence type="fractalNoise" baseFrequency="0.65" numOctaves="2" seed="7" result="hi0"/>
 <feColorMatrix in="hi0" type="matrix" values="1 0 0 0 0  1 0 0 0 0  1 0 0 0 0  0 0 0 0 1" result="hi"/>
 <feTurbulence type="fractalNoise" baseFrequency="0.08" numOctaves="3" seed="1" result="lo0"/>
 <feColorMatrix in="lo0" type="matrix" values="1 0 0 0 0  1 0 0 0 0  1 0 0 0 0  0 0 0 0 1" result="lo"/>
 <feComposite in="hi" in2="lo" operator="arithmetic" k1="0" k2="1.5" k3="1.2" k4="-0.85" result="g"/>
 <feComponentTransfer in="g"><feFuncR type="table" tableValues="0.18 0.22 0.34 0.55 0.8 0.93"/><feFuncG type="table" tableValues="0.2 0.24 0.36 0.57 0.82 0.95"/><feFuncB type="table" tableValues="0.52 0.6 0.72 0.85 0.96 1"/></feComponentTransfer>
</filter>
<filter id="fColSpots" x="0" y="0" width="100%" height="100%" color-interpolation-filters="sRGB">
 <feTurbulence type="fractalNoise" baseFrequency="0.13 0.16" numOctaves="2" seed="12" result="lo"/>
 <feColorMatrix in="lo" type="matrix" values="1 0 0 0 0  1 0 0 0 0  1 0 0 0 0  0 0 0 0 1" result="g"/>
 <feComponentTransfer in="g"><feFuncR type="table" tableValues="0.95 0.95 0.94 0.93 0.9 0.6 0.08 0.06 0.06 0.06"/><feFuncG type="table" tableValues="0.95 0.95 0.94 0.93 0.9 0.6 0.08 0.06 0.06 0.06"/><feFuncB type="table" tableValues="0.96 0.96 0.95 0.94 0.92 0.62 0.1 0.08 0.08 0.08"/></feComponentTransfer>
</filter>
<filter id="fColCell" x="0" y="0" width="100%" height="100%" color-interpolation-filters="sRGB">
 <feTurbulence type="fractalNoise" baseFrequency="0.13" numOctaves="1" seed="8" result="lo0"/>
 <feColorMatrix in="lo0" type="matrix" values="1 0 0 0 0  1 0 0 0 0  1 0 0 0 0  0 0 0 0 1" result="lo"/>
 <feTurbulence type="fractalNoise" baseFrequency="0.9" numOctaves="1" seed="4" result="hi0"/>
 <feColorMatrix in="hi0" type="matrix" values="1 0 0 0 0  1 0 0 0 0  1 0 0 0 0  0 0 0 0 1" result="hi"/>
 <feComposite in="lo" in2="hi" operator="arithmetic" k1="0" k2="2.6" k3="0.1" k4="-0.850" result="g"/>
 <feComponentTransfer in="g" result="c"><feFuncR type="table" tableValues="0.1 0.1 0.1 0.1 0.1 0.1 0.1 0.1 0.1 0.1 0.1 0.155 0.246 0.337 0.428 0.519 0.61 0.652 0.695 0.738 0.78 0.738 0.695 0.653 0.61 0.519 0.428 0.337 0.246 0.155 0.1 0.1 0.1 0.1 0.1 0.1 0.1 0.1 0.1 0.1 0.1"/><feFuncG type="table" tableValues="0.12 0.12 0.12 0.12 0.12 0.12 0.12 0.12 0.12 0.12 0.12 0.175 0.268 0.36 0.453 0.545 0.638 0.681 0.724 0.767 0.81 0.767 0.724 0.681 0.638 0.545 0.453 0.36 0.268 0.175 0.12 0.12 0.12 0.12 0.12 0.12 0.12 0.12 0.12 0.12 0.12"/><feFuncB type="table" tableValues="0.21 0.21 0.21 0.21 0.21 0.21 0.21 0.21 0.21 0.21 0.21 0.265 0.358 0.45 0.543 0.635 0.728 0.771 0.814 0.857 0.9 0.857 0.814 0.771 0.728 0.635 0.543 0.45 0.358 0.265 0.21 0.21 0.21 0.21 0.21 0.21 0.21 0.21 0.21 0.21 0.21"/></feComponentTransfer>
 <feColorMatrix in="hi" type="matrix" values="0 0 0 0 0.8  0 0 0 0 0.84  0 0 0 0 0.95  5 0 0 0 -3.2" result="s"/>
 <feMerge><feMergeNode in="c"/><feMergeNode in="s"/></feMerge>
</filter>
<filter id="fHeight3" x="0" y="0" width="100%" height="100%" color-interpolation-filters="sRGB">
 <feTurbulence type="fractalNoise" baseFrequency="0.04" numOctaves="2" seed="23" result="lo0"/>
 <feColorMatrix in="lo0" type="matrix" values="1 0 0 0 0  1 0 0 0 0  1 0 0 0 0  0 0 0 0 1" result="lo"/>
 <feTurbulence type="fractalNoise" baseFrequency="0.2" numOctaves="2" seed="17" result="hi0"/>
 <feColorMatrix in="hi0" type="matrix" values="1 0 0 0 0  1 0 0 0 0  1 0 0 0 0  0 0 0 0 1" result="hi"/>
 <feComposite in="lo" in2="hi" operator="arithmetic" k1="0" k2="1.3" k3="0.6" k4="-0.45" result="g"/>
 <feComponentTransfer in="g"><feFuncR type="table" tableValues="0 0 0 0 0 0 0.05 0.4 0.95 1"/><feFuncG type="table" tableValues="0.2 0.45 0.75 0.92 0.97 1 1 0.95 0.7 0.25"/><feFuncB type="table" tableValues="0.95 1 1 0.9 0.6 0.3 0.1 0 0 0"/></feComponentTransfer>
</filter>
<filter id="fHeight" x="0" y="0" width="100%" height="100%" color-interpolation-filters="sRGB">
 <feTurbulence type="fractalNoise" baseFrequency="0.05" numOctaves="2" seed="31" result="lo"/>
 <feColorMatrix in="lo" type="matrix" values="1 0 0 0 0  1 0 0 0 0  1 0 0 0 0  0 0 0 0 1" result="g"/>
 <feComponentTransfer in="g"><feFuncR type="table" tableValues="0.05 0.0 0.0 0.0 0.02 0.1 0.3"/><feFuncG type="table" tableValues="0.85 0.9 0.94 0.96 0.96 0.96 0.94"/><feFuncB type="table" tableValues="1 0.97 0.9 0.55 0.35 0.3 0.15"/></feComponentTransfer>
</filter>
<filter id="fMain" x="0" y="0" width="100%" height="100%" color-interpolation-filters="sRGB">
 <feTurbulence type="fractalNoise" baseFrequency="0.12 0.2" numOctaves="2" seed="41" result="lo0"/>
 <feColorMatrix in="lo0" type="matrix" values="1 0 0 0 0  1 0 0 0 0  1 0 0 0 0  0 0 0 0 1" result="lo"/>
 <feTurbulence type="fractalNoise" baseFrequency="0.6" numOctaves="1" seed="43" result="hi0"/>
 <feColorMatrix in="hi0" type="matrix" values="1 0 0 0 0  1 0 0 0 0  1 0 0 0 0  0 0 0 0 1" result="hi"/>
 <feComposite in="lo" in2="hi" operator="arithmetic" k1="0" k2="1.4" k3="0.5" k4="-0.45" result="g"/>
 <feComponentTransfer in="g" result="c"><feFuncR type="table" tableValues="0.1 0.08 0.06 0.08 0.15 0.5 0.9"/><feFuncG type="table" tableValues="0.35 0.6 0.75 0.8 0.85 0.88 0.85"/><feFuncB type="table" tableValues="0.9 0.88 0.75 0.45 0.25 0.15 0.1"/></feComponentTransfer>
 <feComposite in="c" in2="SourceAlpha" operator="in"/>
</filter>
<filter id="fBlur" x="-50%" y="-50%" width="200%" height="200%"><feGaussianBlur stdDeviation="5"/></filter>
<filter id="fBlur2" x="-50%" y="-50%" width="200%" height="200%"><feGaussianBlur stdDeviation="2"/></filter>
<linearGradient id="cbar" x1="0" y1="0" x2="0" y2="1"><stop offset="0" stop-color="#ff3030"/><stop offset="0.25" stop-color="#e0e020"/><stop offset="0.5" stop-color="#30d040"/><stop offset="0.75" stop-color="#20a0e0"/><stop offset="1" stop-color="#2020c0"/></linearGradient>
</defs></svg>
<svg class="a" style="left:272px;top:222px" width="97" height="97" viewBox="0 0 97 97"><rect x="0" y="0" width="97" height="97" fill="#000"/><polygon points="2.0,65.0 34.0,32.0 86.0,41.0 67.0,87.0" fill="#fff" filter="url(#fMain)"/><polygon points="2.0,65.0 34.0,32.0 86.0,41.0 67.0,87.0" fill="none" stroke="#c8d0d0" stroke-width="0.7" stroke-dasharray="1 2.5"/><rect x="89" y="6" width="2" height="40" fill="url(#cbar)"/><rect x="89" y="3" width="4" height="1.5" fill="#888"/><rect x="58" y="90" width="8" height="1.5" fill="#777"/></svg>
<svg class="a" style="left:380px;top:222px" width="97" height="97" viewBox="11 7 97 97"><rect x="11" y="7" width="97" height="97" filter="url(#fIntDark)"/></svg>
<svg class="a" style="left:489px;top:222px" width="97" height="97" viewBox="22 14 97 97"><rect x="22" y="14" width="97" height="97" filter="url(#fColBlue)"/></svg>
<svg class="a" style="left:597px;top:222px" width="97" height="97" viewBox="33 21 97 97"><clipPath id="cpH"><rect x="33" y="21" width="97" height="97"/></clipPath><g clip-path="url(#cpH)"><rect x="33" y="21" width="97" height="97" fill="#08f048"/><rect x="33" y="21" width="97" height="97" filter="url(#fHeight)" opacity="0.45"/><g filter="url(#fBlur)"><ellipse cx="39" cy="69" rx="10" ry="30" fill="#1870f0"/><ellipse cx="41" cy="83" rx="7" ry="10" fill="#0a50e8"/><ellipse cx="63" cy="27" rx="18" ry="9" fill="#1a78f0"/><ellipse cx="93" cy="106" rx="12" ry="8" fill="#1060f0"/><ellipse cx="113" cy="61" rx="16" ry="18" fill="#08e0f0"/><ellipse cx="108" cy="31" rx="14" ry="8" fill="#10e0e8"/><ellipse cx="115" cy="93" rx="12" ry="10" fill="#18b0f0"/><ellipse cx="83" cy="83" rx="14" ry="8" fill="#10e8e0"/><ellipse cx="43" cy="113" rx="10" ry="5" fill="#10d8f0"/></g><g filter="url(#fBlur2)"><ellipse cx="59" cy="66" rx="5" ry="3" fill="#f09020"/><ellipse cx="69" cy="49" rx="4" ry="3.5" fill="#e8e020"/><ellipse cx="90" cy="71" rx="5" ry="5" fill="#f08020"/><ellipse cx="45" cy="101" rx="8" ry="4" fill="#e8e820"/><ellipse cx="124" cy="109" rx="4" ry="5" fill="#f0c020"/><ellipse cx="103" cy="24" rx="4" ry="3" fill="#d0e030"/><ellipse cx="70" cy="85" rx="5" ry="4" fill="#c8f030"/><ellipse cx="88" cy="33" rx="3" ry="2" fill="#e8e030"/></g></g></svg>
<svg class="a" style="left:272px;top:330px" width="97" height="97" viewBox="37 53 97 97"><rect x="37" y="53" width="97" height="97" fill="#000"/><polygon points="39.0,116.0 70.0,85.0 124.0,94.0 106.0,139.0" fill="#fff" filter="url(#fMain)"/><polygon points="39.0,116.0 70.0,85.0 124.0,94.0 106.0,139.0" fill="none" stroke="#c8d0d0" stroke-width="0.7" stroke-dasharray="1 2.5"/><rect x="126" y="59" width="2" height="40" fill="url(#cbar)"/><rect x="126" y="56" width="4" height="1.5" fill="#888"/><rect x="95" y="143" width="8" height="1.5" fill="#777"/></svg>
<svg class="a" style="left:380px;top:330px" width="97" height="97" viewBox="48 60 97 97"><rect x="48" y="60" width="97" height="97" filter="url(#fIntDark)"/></svg>
<svg class="a" style="left:489px;top:330px" width="97" height="97" viewBox="59 67 97 97"><rect x="59" y="67" width="97" height="97" filter="url(#fColSpots)"/></svg>
<svg class="a" style="left:597px;top:330px" width="97" height="97" viewBox="70 74 97 97"><rect x="70" y="74" width="97" height="97" filter="url(#fHeight)"/></svg>
<svg class="a" style="left:272px;top:438px" width="97" height="97" viewBox="74 106 97 97"><rect x="74" y="106" width="97" height="97" fill="#000"/><polygon points="76.0,169.0 107.0,138.0 161.0,147.0 143.0,192.0" fill="#fff" filter="url(#fMain)"/><polygon points="76.0,169.0 107.0,138.0 161.0,147.0 143.0,192.0" fill="none" stroke="#c8d0d0" stroke-width="0.7" stroke-dasharray="1 2.5"/><rect x="163" y="112" width="2" height="40" fill="url(#cbar)"/><rect x="163" y="109" width="4" height="1.5" fill="#888"/><rect x="132" y="196" width="8" height="1.5" fill="#777"/></svg>
<svg class="a" style="left:380px;top:438px" width="97" height="97" viewBox="85 113 97 97"><rect x="85" y="113" width="97" height="97" filter="url(#fIntCell)"/></svg>
<svg class="a" style="left:489px;top:438px" width="97" height="97" viewBox="96 120 97 97"><rect x="96" y="120" width="97" height="97" filter="url(#fColCell)"/></svg>
<svg class="a" style="left:597px;top:438px" width="97" height="97" viewBox="107 127 97 97"><rect x="107" y="127" width="97" height="97" filter="url(#fHeight)"/></svg>
<svg class="a" style="left:272px;top:546px" width="97" height="97" viewBox="111 159 97 97"><rect x="111" y="159" width="97" height="97" fill="#000"/><polygon points="113.0,222.0 144.0,191.0 198.0,200.0 180.0,245.0" fill="#fff" filter="url(#fMain)"/><polygon points="113.0,222.0 144.0,191.0 198.0,200.0 180.0,245.0" fill="none" stroke="#c8d0d0" stroke-width="0.7" stroke-dasharray="1 2.5"/><rect x="200" y="165" width="2" height="40" fill="url(#cbar)"/><rect x="200" y="162" width="4" height="1.5" fill="#888"/><rect x="169" y="249" width="8" height="1.5" fill="#777"/></svg>
<svg class="a" style="left:380px;top:546px" width="97" height="97" viewBox="122 166 97 97"><rect x="122" y="166" width="97" height="97" filter="url(#fIntCell)"/></svg>
<svg class="a" style="left:489px;top:546px" width="97" height="97" viewBox="133 173 97 97"><rect x="133" y="173" width="97" height="97" filter="url(#fColCell)"/></svg>
<svg class="a" style="left:597px;top:546px" width="97" height="97" viewBox="144 180 97 97"><rect x="144" y="180" width="97" height="97" filter="url(#fHeight)"/></svg>
<svg class="a" style="left:272px;top:653px" width="97" height="97" viewBox="148 212 97 97"><rect x="148" y="212" width="97" height="97" fill="#000"/><polygon points="150.0,275.0 181.0,244.0 235.0,253.0 217.0,298.0" fill="#fff" filter="url(#fMain)"/><polygon points="150.0,275.0 181.0,244.0 235.0,253.0 217.0,298.0" fill="none" stroke="#c8d0d0" stroke-width="0.7" stroke-dasharray="1 2.5"/><rect x="237" y="218" width="2" height="40" fill="url(#cbar)"/><rect x="237" y="215" width="4" height="1.5" fill="#888"/><rect x="206" y="302" width="8" height="1.5" fill="#777"/></svg>
<svg class="a" style="left:380px;top:653px" width="97" height="97" viewBox="159 219 97 97"><rect x="159" y="219" width="97" height="97" filter="url(#fIntCell)"/></svg>
<svg class="a" style="left:489px;top:653px" width="97" height="97" viewBox="170 226 97 97"><rect x="170" y="226" width="97" height="97" filter="url(#fColCell)"/></svg>
<svg class="a" style="left:597px;top:653px" width="97" height="97" viewBox="181 233 97 97"><rect x="181" y="233" width="97" height="97" filter="url(#fHeight)"/></svg>
<svg class="a" style="left:272px;top:761px" width="97" height="97" viewBox="185 265 97 97"><rect x="185" y="265" width="97" height="97" fill="#000"/><polygon points="187.0,328.0 218.0,297.0 272.0,306.0 254.0,351.0" fill="#fff" filter="url(#fMain)"/><polygon points="187.0,328.0 218.0,297.0 272.0,306.0 254.0,351.0" fill="none" stroke="#c8d0d0" stroke-width="0.7" stroke-dasharray="1 2.5"/><rect x="274" y="271" width="2" height="40" fill="url(#cbar)"/><rect x="274" y="268" width="4" height="1.5" fill="#888"/><rect x="243" y="355" width="8" height="1.5" fill="#777"/></svg>
<svg class="a" style="left:380px;top:761px" width="97" height="97" viewBox="196 272 97 97"><rect x="196" y="272" width="97" height="97" filter="url(#fIntCell)"/></svg>
<svg class="a" style="left:489px;top:761px" width="97" height="97" viewBox="207 279 97 97"><rect x="207" y="279" width="97" height="97" filter="url(#fColCell)"/></svg>
<svg class="a" style="left:597px;top:761px" width="97" height="97" viewBox="218 286 97 97"><rect x="218" y="286" width="97" height="97" filter="url(#fHeight)"/></svg>
<svg class="a" style="left:272px;top:869px" width="97" height="31" viewBox="222 318 97 31"><rect x="222" y="318" width="97" height="97" fill="#000"/><polygon points="224.0,381.0 255.0,350.0 309.0,359.0 291.0,404.0" fill="#fff" filter="url(#fMain)"/><polygon points="224.0,381.0 255.0,350.0 309.0,359.0 291.0,404.0" fill="none" stroke="#c8d0d0" stroke-width="0.7" stroke-dasharray="1 2.5"/><rect x="311" y="324" width="2" height="40" fill="url(#cbar)"/><rect x="311" y="321" width="4" height="1.5" fill="#888"/><rect x="280" y="408" width="8" height="1.5" fill="#777"/></svg>
<svg class="a" style="left:380px;top:869px" width="97" height="31" viewBox="233 325 97 31"><rect x="233" y="325" width="97" height="97" filter="url(#fIntCell)"/></svg>
<svg class="a" style="left:489px;top:869px" width="97" height="31" viewBox="244 332 97 31"><rect x="244" y="332" width="97" height="97" filter="url(#fColCell)"/></svg>
<svg class="a" style="left:597px;top:869px" width="97" height="31" viewBox="255 339 97 31"><rect x="255" y="339" width="97" height="97" filter="url(#fHeight)"/></svg>
<div class="a" style="left:1614px;top:155px;width:17px;height:745px;background:#e9eaea"></div>
<div class="a" style="left:1614px;top:171px;width:17px;height:158px;background:#c9c9c9"></div>
<svg class="a" style="left:1614px;top:158px" width="17" height="10"><path d="M5 7 L8.5 3.5 L12 7" stroke="#b0b0b0" fill="none" stroke-width="1.2"/></svg>
<svg class="a" style="left:1614px;top:888px" width="17" height="10"><path d="M5 3 L8.5 6.5 L12 3" stroke="#b0b0b0" fill="none" stroke-width="1.2"/></svg>
<div class="a" style="left:9px;top:900px;width:1605px;height:16px;background:#e9eaea"></div>
<div class="a" style="left:25px;top:900px;width:630px;height:16px;background:#cdcdcd"></div>
<svg class="a" style="left:10px;top:900px" width="14" height="16"><path d="M9 4.5 L6 8 L9 11.5" stroke="#b0b0b0" fill="none" stroke-width="1.2"/></svg>
<svg class="a" style="left:1599px;top:900px" width="14" height="16"><path d="M6 4.5 L9 8 L6 11.5" stroke="#b0b0b0" fill="none" stroke-width="1.2"/></svg>
<div class="a" style="left:1614px;top:900px;width:17px;height:16px;background:#202225"></div>
<div id="status" class="a"></div>
<svg class="a" style="left:5px;top:927px" width="18" height="26" viewBox="0 0 18 26"><path d="M9 2 C4 2 2 5.5 2 9 C2 12 4 14 5.5 16 L6 19 H12 L12.5 16 C14 14 16 12 16 9 C16 5.5 14 2 9 2 Z" fill="none" stroke="#e8e8e8" stroke-width="1.3"/><path d="M6.5 21 H11.5 M7 23 H11" stroke="#e8e8e8" stroke-width="1.2"/></svg>
<div class="a" style="left:28px;top:933px;color:#ececec;font-size:10.6px;line-height:14px;white-space:nowrap">Right-click on a cell to register the data</div>
<div class="a" style="left:224px;top:928px;width:1px;height:24px;background:#2e3134"></div>
</body></html>
